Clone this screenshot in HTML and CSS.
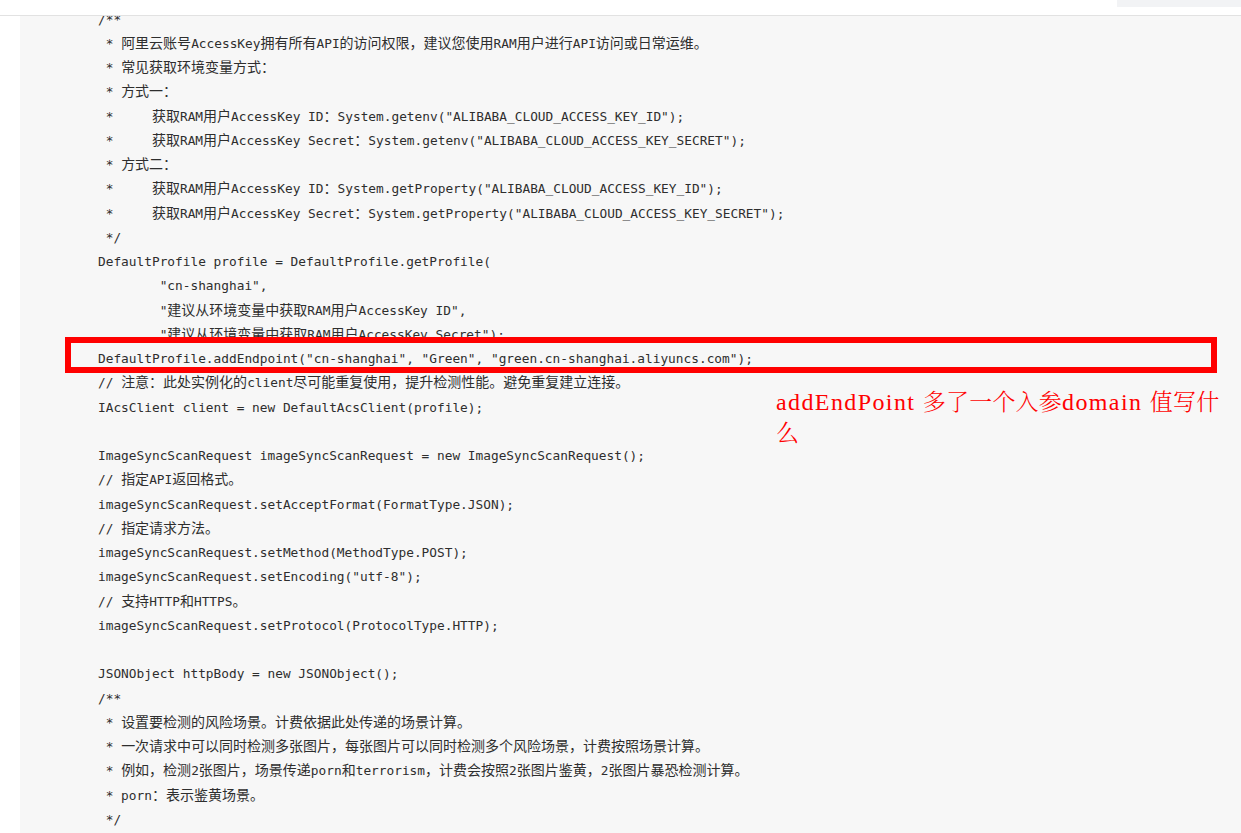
FILE: index.html
```html
<!DOCTYPE html>
<html lang="zh-CN">
<head>
<meta charset="utf-8">
<title>code</title>
<link rel="stylesheet" href="styles.css">
</head>
<body>
<div class="page">
  <header class="top"><div class="top-box"></div></header>
  <main class="main">
    <div class="code-area">
<pre class="code">/**
 * <span class="z">阿里云账号</span>AccessKey<span class="z">拥有所有</span>API<span class="z">的访问权限，建议您使用</span>RAM<span class="z">用户进行</span>API<span class="z">访问或日常运维。</span>
 * <span class="z">常见获取环境变量方式：</span>
 * <span class="z">方式一：</span>
 *     <span class="z">获取</span>RAM<span class="z">用户</span>AccessKey ID<span class="z">：</span>System.getenv("ALIBABA_CLOUD_ACCESS_KEY_ID");
 *     <span class="z">获取</span>RAM<span class="z">用户</span>AccessKey Secret<span class="z">：</span>System.getenv("ALIBABA_CLOUD_ACCESS_KEY_SECRET");
 * <span class="z">方式二：</span>
 *     <span class="z">获取</span>RAM<span class="z">用户</span>AccessKey ID<span class="z">：</span>System.getProperty("ALIBABA_CLOUD_ACCESS_KEY_ID");
 *     <span class="z">获取</span>RAM<span class="z">用户</span>AccessKey Secret<span class="z">：</span>System.getProperty("ALIBABA_CLOUD_ACCESS_KEY_SECRET");
 */
DefaultProfile profile = DefaultProfile.getProfile(
        "cn-shanghai",
        "<span class="z">建议从环境变量中获取</span>RAM<span class="z">用户</span>AccessKey ID",
        "<span class="z">建议从环境变量中获取</span>RAM<span class="z">用户</span>AccessKey Secret");
DefaultProfile.addEndpoint("cn-shanghai", "Green", "green.cn-shanghai.aliyuncs.com");
// <span class="z">注意：此处实例化的</span>client<span class="z">尽可能重复使用，提升检测性能。避免重复建立连接。</span>
IAcsClient client = new DefaultAcsClient(profile);

ImageSyncScanRequest imageSyncScanRequest = new ImageSyncScanRequest();
// <span class="z">指定</span>API<span class="z">返回格式。</span>
imageSyncScanRequest.setAcceptFormat(FormatType.JSON);
// <span class="z">指定请求方法。</span>
imageSyncScanRequest.setMethod(MethodType.POST);
imageSyncScanRequest.setEncoding("utf-8");
// <span class="z">支持</span>HTTP<span class="z">和</span>HTTPS<span class="z">。</span>
imageSyncScanRequest.setProtocol(ProtocolType.HTTP);

JSONObject httpBody = new JSONObject();
/**
 * <span class="z">设置要检测的风险场景。计费依据此处传递的场景计算。</span>
 * <span class="z">一次请求中可以同时检测多张图片，每张图片可以同时检测多个风险场景，计费按照场景计算。</span>
 * <span class="z">例如，检测</span>2<span class="z">张图片，场景传递</span>porn<span class="z">和</span>terrorism<span class="z">，计费会按照</span>2<span class="z">张图片鉴黄，</span>2<span class="z">张图片暴恐检测计算。</span>
 * porn<span class="z">：表示鉴黄场景。</span>
 */
</pre>
    </div>
  </main>
  <div class="mark-box"></div>
  <p class="note">addEndPoint <span class="note-cjk">多了一个入参</span>domain <span class="note-cjk">值写什</span><br><span class="note-cjk">么</span></p>
</div>
</body>
</html>
```
FILE: styles.css
```css
html, body {
  margin: 0;
  padding: 0;
  background: #ffffff;
}

.page {
  position: relative;
  width: 1241px;
  height: 833px;
  overflow: hidden;
}

.top {
  height: 15px;
  border-bottom: 1px solid #e2e2e2;
  display: flex;
  justify-content: flex-end;
  background: #ffffff;
  position: relative;
  z-index: 2;
}

.top-box {
  width: 124px;
  height: 7px;
  background: #f2f3f5;
}

.main {
  display: flex;
  padding-left: 20px;
  height: 817px;
}

.code-area {
  flex: 1;
  background: #f7f7f7;
  overflow: hidden;
}

.code {
  margin: -8.5px 0 0 0;
  padding: 0 0 0 78px;
  font-family: "DejaVu Sans Mono", "Liberation Mono", "Noto Sans CJK SC", monospace;
  font-size: 12.8px;
  line-height: 24.25px;
  color: #2e2e2e;
  white-space: pre;
}

.z {
  font-family: "Noto Sans CJK SC", sans-serif;
  font-size: 14px;
  line-height: 14px;
}

.mark-box {
  position: absolute;
  left: 65px;
  top: 337px;
  width: 1152px;
  height: 36px;
  box-sizing: border-box;
  border: 6px solid #ff0000;
}

.note {
  position: absolute;
  left: 776px;
  top: 386px;
  margin: 0;
  color: #ff0000;
  font-family: "Liberation Serif", "Noto Serif CJK SC", "Noto Sans CJK SC", serif;
  font-size: 24px;
  letter-spacing: 1.4px;
  line-height: 29px;
  white-space: nowrap;
}

.note-cjk {
  font-family: "Noto Serif CJK SC", "Noto Sans CJK SC", serif;
  font-size: 23px;
  font-weight: 300;
  letter-spacing: 0.2px;
}
```
